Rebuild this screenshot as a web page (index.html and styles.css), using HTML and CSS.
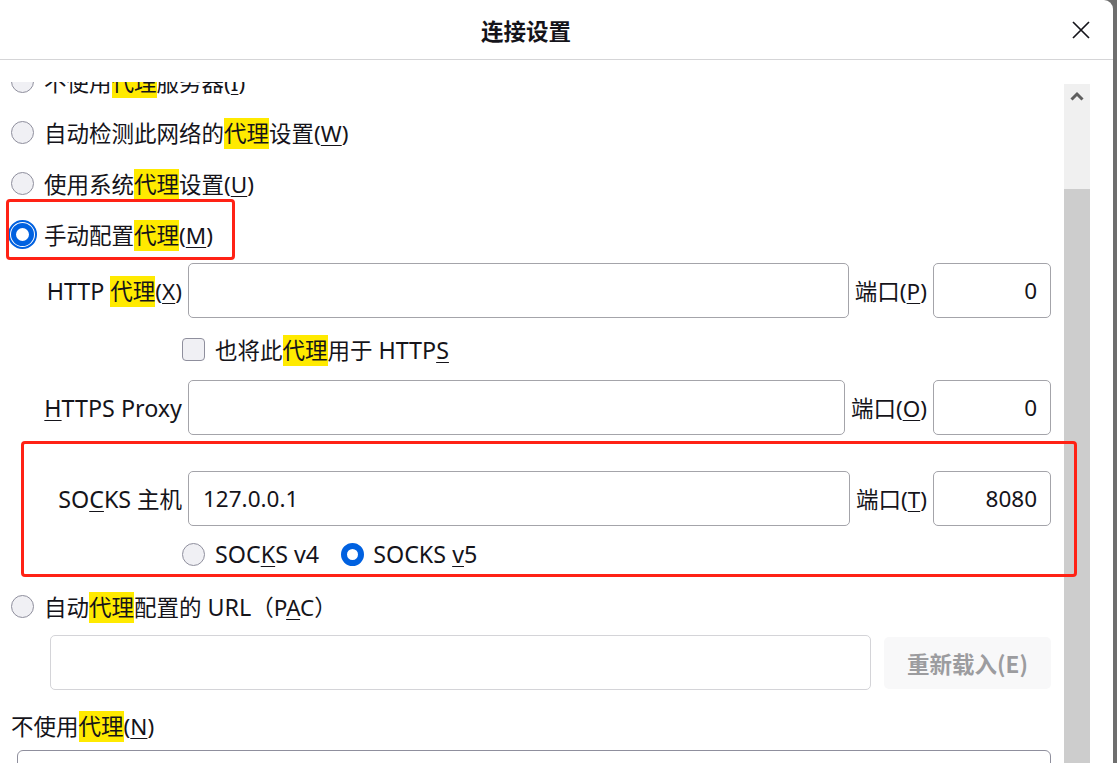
FILE: index.html
```html
<!DOCTYPE html>
<html lang="zh-CN">
<head>
<meta charset="utf-8">
<title>连接设置</title>
<link rel="stylesheet" href="styles.css">
</head>
<body>
<div class="dialog">
  <header class="header">
    <h1 class="title">连接设置</h1>
    <div class="spacer"></div>
    <button class="close" aria-label="关闭">
      <svg width="18" height="18" viewBox="0 0 18 18"><path d="M1 1 L17 17 M17 1 L1 17" stroke="#15141a" stroke-width="1.7" fill="none"/></svg>
    </button>
  </header>
  <div class="main">
    <div class="scroll">
      <div class="content">
        <div class="opt"><span class="radio"></span><span>不使用<span class="hl">代理</span>服务器(<u>I</u>)</span></div>
        <div class="opt"><span class="radio"></span><span>自动检测此网络的<span class="hl">代理</span>设置(<u>W</u>)</span></div>
        <div class="opt"><span class="radio"></span><span>使用系统<span class="hl">代理</span>设置(<u>U</u>)</span></div>
        <div class="opt"><span class="radio checked focus"></span><span>手动配置<span class="hl">代理</span>(<u>M</u>)</span></div>

        <div class="field first">
          <span class="field-label"><span class="en">HTTP</span> <span class="hl">代理</span>(<u>X</u>)</span>
          <span class="input"></span>
          <span class="port-label">端口(<u>P</u>)</span>
          <span class="input port">0</span>
        </div>
        <div class="check-row"><span class="checkbox"></span><span>也将此<span class="hl">代理</span>用于 <span class="en">HTTP<u>S</u></span></span></div>
        <div class="field https">
          <span class="field-label en"><u>H</u>TTPS Proxy</span>
          <span class="input"></span>
          <span class="port-label">端口(<u>O</u>)</span>
          <span class="input port">0</span>
        </div>
        <div class="field socks">
          <span class="field-label"><span class="en">SO<u>C</u>KS</span> 主机</span>
          <span class="input text">127.0.0.1</span>
          <span class="port-label">端口(<u>T</u>)</span>
          <span class="input port">8080</span>
        </div>
        <div class="version-row">
          <span class="ver"><span class="radio"></span><span class="en">SOC<u>K</u>S v4</span></span>
          <span class="ver v5"><span class="radio checked"></span><span class="en">SOCKS <u>v</u>5</span></span>
        </div>
        <div class="opt pac"><span class="radio"></span><span>自动<span class="hl">代理</span>配置的 <span class="en">URL</span>（P<u>A</u>C）</span></div>
        <div class="pac-field">
          <span class="input disabled"></span>
          <span class="reload">重新载入(E)</span>
        </div>
        <div class="noproxy">不使用<span class="hl">代理</span>(<u>N</u>)</div>
        <div class="textarea"></div>
      </div>
    </div>
    <div class="scrollbar">
      <div class="track">
        <svg width="14" height="12" viewBox="0 0 14 12"><path d="M1.5 9.5 L7 4 L12.5 9.5" stroke="#5f5f5f" stroke-width="3" fill="none"/></svg>
      </div>
      <div class="thumb"></div>
    </div>
    <div class="mark mark-manual"></div>
    <div class="mark mark-socks"></div>
  </div>
</div>
</body>
</html>
```

FILE: styles.css
```css
html, body {
  margin: 0;
  padding: 0;
  height: 100%;
  overflow: hidden;
}
body {
  background: #6e6e6e;
  font-family: "Noto Sans", "Noto Sans CJK SC", sans-serif;
  font-size: 22.5px;
  color: #15141a;
}
u {
  text-decoration: underline;
  text-decoration-thickness: 1px;
  text-underline-offset: 3px;
}
.en { font-size: 23.3px; }
.dialog {
  width: 1113px;
  height: 100vh;
  background: #fff;
  border-top-right-radius: 9px;
  display: flex;
  flex-direction: column;
  overflow: hidden;
}
.header {
  height: 59px;
  flex: none;
  border-bottom: 1px solid #d5d5d7;
  display: flex;
  align-items: center;
  padding-left: 481px;
  padding-right: 23px;
}
.title {
  margin: 0;
  font-size: 22.5px;
  font-weight: 700;
  font-family: "Noto Sans CJK SC", sans-serif;
  line-height: 1;
  padding-top: 2px;
}
.spacer { flex: 1; }
.close {
  border: 0;
  background: none;
  padding: 0;
  width: 18px;
  height: 18px;
  display: flex;
  margin-top: 1px;
}
.main {
  flex: 1;
  display: flex;
  position: relative;
  min-height: 0;
}
.scroll {
  width: 1064px;
  flex: none;
  margin-top: 22px;
  overflow: hidden;
}
.content {
  margin-top: -26px;
  padding-right: 13px;
}
.opt {
  height: 51px;
  display: flex;
  align-items: center;
  gap: 10px;
  padding-left: 11px;
}
.radio {
  width: 23px;
  height: 23px;
  box-sizing: border-box;
  border-radius: 50%;
  border: 1px solid #8f8f9d;
  background: #f0f0f4;
  flex: none;
}
.radio.checked {
  border: 6px solid #0061e0;
  background: #fff;
}
.radio.focus {
  border-width: 5px;
  outline: 2px solid #0061e0;
  outline-offset: 1px;
}
.hl { background: #ffea00; }
.field {
  height: 55px;
  display: flex;
  align-items: center;
  gap: 6px;
}
.field.first { margin-top: 3px; }
.field.https { margin-top: 19px; }
.field.socks { margin-top: 36px; }
.field-label {
  width: 182px;
  flex: none;
  text-align: right;
}
.input {
  flex: 1;
  height: 55px;
  box-sizing: border-box;
  border: 1px solid #a4a4aa;
  border-radius: 5px;
  background: #fff;
  display: flex;
  align-items: center;
}
.input.text { padding-left: 14px; }
.input.port {
  flex: none;
  width: 118px;
  justify-content: flex-end;
  padding-right: 13px;
}
.port-label { flex: none; }
.check-row {
  margin-top: 19px;
  height: 24px;
  display: flex;
  align-items: center;
  gap: 10px;
  padding-left: 182px;
}
.checkbox {
  width: 23px;
  height: 23px;
  box-sizing: border-box;
  border: 1px solid #8f8f9d;
  border-radius: 4px;
  background: #f0f0f4;
  flex: none;
}
.version-row {
  margin-top: 16px;
  height: 24px;
  display: flex;
  align-items: center;
  padding-left: 182px;
}
.ver {
  display: flex;
  align-items: center;
  gap: 10px;
}
.ver.v5 { margin-left: 22px; gap: 9px; }
.opt.pac {
  margin-top: 28px;
  height: 24px;
  padding-left: 11px;
}
.pac-field {
  margin-top: 17px;
  height: 55px;
  display: flex;
  align-items: center;
  gap: 13px;
  padding-left: 50px;
}
.input.disabled { border-color: #d4d4d8; }
.reload {
  width: 167px;
  height: 52px;
  flex: none;
  border-radius: 5px;
  background: #f8f8f9;
  color: #9c9c9f;
  font-weight: 700;
  display: flex;
  align-items: center;
  justify-content: center;
  font-family: "Noto Sans CJK SC", sans-serif;
}
.noproxy {
  margin-top: 22px;
  height: 30px;
  line-height: 30px;
  padding-left: 11px;
}
.textarea {
  margin-top: 8px;
  margin-left: 17px;
  height: 150px;
  border: 1px solid #8f8f9d;
  border-radius: 6px;
}
.scrollbar {
  width: 26px;
  flex: none;
  margin-top: 24px;
  display: flex;
  flex-direction: column;
}
.track {
  height: 105px;
  background: #f0f0f0;
  display: flex;
  justify-content: center;
  padding-top: 6px;
  box-sizing: border-box;
}
.thumb {
  flex: 1;
  background: #cdcdcd;
}
.mark {
  position: absolute;
  border: 3px solid #ff2215;
  border-radius: 4px;
  box-sizing: border-box;
  z-index: 2;
}
.mark-manual {
  left: 6px;
  top: 139px;
  width: 229px;
  height: 61px;
}
.mark-socks {
  left: 21px;
  top: 381px;
  width: 1056px;
  height: 136px;
}
```
